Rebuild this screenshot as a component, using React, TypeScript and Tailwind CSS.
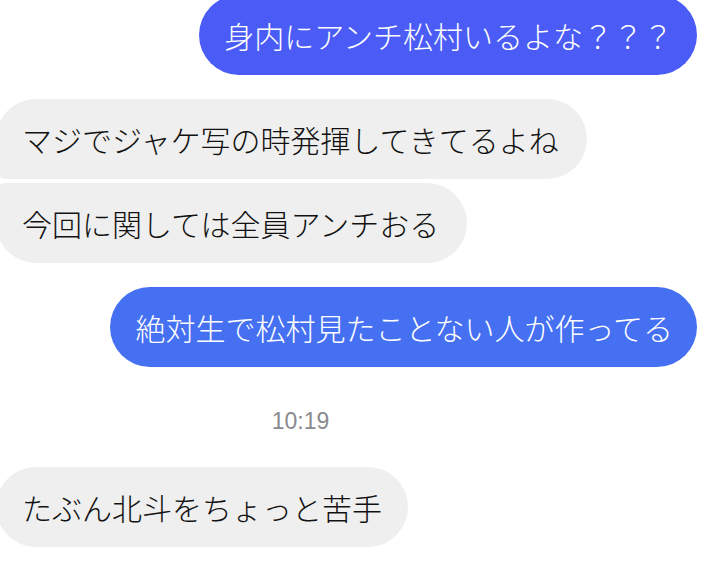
import React from "react";

const jp = { fontFamily: '"Noto Sans CJK JP", "Noto Sans", sans-serif' };

export default function App() {
  return (
    <div className="w-[715px] h-[568px] overflow-hidden bg-white flex flex-col" style={jp}>
      <div className="self-end mr-[18px] mt-[-5px] h-[80px] flex items-center pl-[25px] pr-[24px] rounded-[40px] bg-[#4a5cf5] text-white text-[30px] font-light whitespace-nowrap leading-none">
        身内にアンチ松村いるよな？？？
      </div>
      <div className="self-start ml-[-4px] mt-[24px] h-[80px] flex items-center pl-[26px] pr-[28px] rounded-tl-[40px] rounded-tr-[40px] rounded-br-[40px] rounded-bl-[10px] bg-[#efefef] text-[#111] text-[30px] font-light whitespace-nowrap leading-none">
        マジでジャケ写の時発揮してきてるよね
      </div>
      <div className="self-start ml-[-4px] mt-[4px] h-[80px] flex items-center pl-[26px] pr-[28px] rounded-tl-[10px] rounded-tr-[40px] rounded-br-[40px] rounded-bl-[40px] bg-[#efefef] text-[#111] text-[30px] font-light whitespace-nowrap leading-none">
        今回に関しては全員アンチおる
      </div>
      <div className="self-end mr-[18px] mt-[24px] h-[80px] flex items-center pl-[25px] pr-[24px] rounded-[40px] bg-[#4570f2] text-white text-[30px] font-light whitespace-nowrap leading-none">
        絶対生で松村見たことない人が作ってる
      </div>
      <div
        className="mt-[42px] h-[24px] flex items-center justify-center text-[23px] text-[#8a8a8e] leading-none"
        style={{ fontFamily: '"Liberation Sans", Arial, sans-serif' }}
      >
        <span className="ml-[-114px]">10:19</span>
      </div>
      <div className="self-start ml-[-4px] mt-[34px] h-[80px] flex items-center pl-[26px] pr-[26px] rounded-[40px] bg-[#efefef] text-[#111] text-[30px] font-light whitespace-nowrap leading-none">
        たぶん北斗をちょっと苦手
      </div>
    </div>
  );
}
